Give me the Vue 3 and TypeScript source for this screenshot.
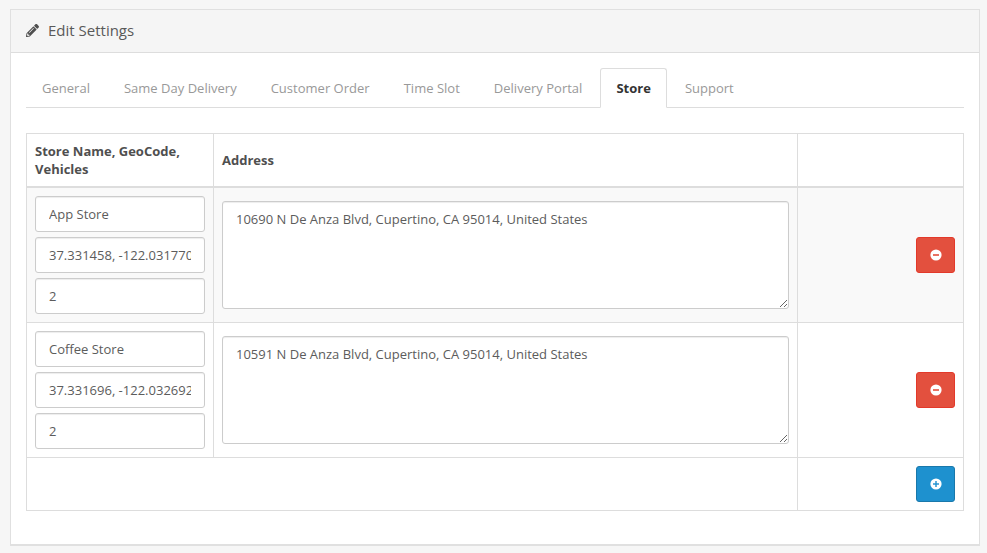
<script setup lang="ts">
interface Store { name: string; geo: string; vehicles: string; address: string }
const tabs: string[] = ['General', 'Same Day Delivery', 'Customer Order', 'Time Slot', 'Delivery Portal', 'Store', 'Support']
const stores: Store[] = [
  { name: 'App Store', geo: '37.331458, -122.031770', vehicles: '2', address: '10690 N De Anza Blvd, Cupertino, CA 95014, United States' },
  { name: 'Coffee Store', geo: '37.331696, -122.032692', vehicles: '2', address: '10591 N De Anza Blvd, Cupertino, CA 95014, United States' }
]
</script>

<template>
  <div class="panel">
    <div class="heading">
      <svg class="pencil" viewBox="0 0 512 512" aria-hidden="true">
        <path fill="currentColor" d="M497.9 142.1l-46.1 46.1c-4.7 4.7-12.3 4.7-17 0l-111-111c-4.7-4.7-4.7-12.3 0-17l46.1-46.1c18.7-18.7 49.1-18.7 67.9 0l60.1 60.1c18.8 18.7 18.8 49.1 0 67.9zM284.2 99.8L21.6 362.4.4 483.9c-2.9 16.4 11.4 30.6 27.8 27.8l121.5-21.3 262.6-262.6c4.7-4.7 4.7-12.3 0-17l-111-111c-4.8-4.7-12.4-4.7-17.1 0zM124.1 339.9c-5.5-5.5-5.5-14.3 0-19.8l154-154c5.5-5.5 14.3-5.5 19.8 0s5.5 14.3 0 19.8l-154 154c-5.5 5.5-14.3 5.5-19.8 0zM88 424h48v36.3l-64.5 11.3-31.1-31.1L51.7 376H88v48z" />
      </svg>
      <h3>Edit Settings</h3>
    </div>
    <div class="body">
      <ul class="tabs">
        <li v-for="t in tabs" :key="t" :class="{ active: t === 'Store' }">{{ t }}</li>
      </ul>
      <table class="grid">
        <colgroup>
          <col class="c1" />
          <col class="c2" />
          <col class="c3" />
        </colgroup>
        <thead>
          <tr>
            <th>Store Name, GeoCode, Vehicles</th>
            <th>Address</th>
            <th></th>
          </tr>
        </thead>
        <tbody>
          <tr v-for="s in stores" :key="s.name">
            <td>
              <input class="field" type="text" :value="s.name" />
              <input class="field" type="text" :value="s.geo" />
              <input class="field last" type="text" :value="s.vehicles" />
            </td>
            <td>
              <textarea class="area" :value="s.address"></textarea>
            </td>
            <td class="act">
              <button class="btn danger" type="button" aria-label="Remove">
                <svg viewBox="0 0 12 12" aria-hidden="true">
                  <circle cx="6" cy="6" r="5.6" fill="#fff" />
                  <rect x="3" y="5.2" width="6" height="1.6" fill="#e3503e" />
                </svg>
              </button>
            </td>
          </tr>
        </tbody>
        <tfoot>
          <tr>
            <td colspan="2"></td>
            <td class="act">
              <button class="btn primary" type="button" aria-label="Add">
                <svg viewBox="0 0 12 12" aria-hidden="true">
                  <circle cx="6" cy="6" r="5.6" fill="#fff" />
                  <rect x="3" y="5.3" width="6" height="1.4" fill="#1e91cf" />
                  <rect x="5.3" y="3" width="1.4" height="6" fill="#1e91cf" />
                </svg>
              </button>
            </td>
          </tr>
        </tfoot>
      </table>
    </div>
  </div>
</template>

<style>
html, body { background: #f6f6f6; margin: 0; }
</style>

<style scoped>
.panel {
  box-sizing: border-box;
  margin: 9px 7px 0 10px;
  height: 537px;
  background: #fff;
  border: 1px solid #e0e0e0;
  border-bottom-width: 2px;
  font-family: "Open Sans", sans-serif;
  font-size: 13px;
  line-height: 18px;
  color: #666;
}
.heading {
  display: flex;
  align-items: center;
  gap: 9px;
  padding: 0 15px 2px;
  box-sizing: border-box;
  height: 43px;
  background: #f5f5f5;
  border-bottom: 1px solid #ddd;
  color: #4f4f4f;
}
.pencil { width: 13px; height: 13px; flex: none; }
h3 { margin: 0; font-size: 15px; font-weight: 400; color: #595959; }
.body { padding: 15px; }
.tabs {
  display: flex;
  list-style: none;
  margin: 0 0 25px;
  padding: 0;
  height: 39px;
  border-bottom: 1px solid #ddd;
  box-sizing: content-box;
}
.tabs li {
  height: 39px;
  box-sizing: border-box;
  margin-right: 2px;
  padding: 10px 15px;
  border: 1px solid transparent;
  border-radius: 3px 3px 0 0;
  color: #999;
  font-size: 13px;
  letter-spacing: 0.012px;
}
.tabs li.active {
  height: 40px;
  background: #fff;
  border-color: #ddd #ddd #fff;
  color: #333;
  font-weight: 700;
}
.grid {
  width: 938px;
  table-layout: fixed;
  border-collapse: collapse;
  border: 1px solid #ddd;
}
.c1 { width: 187px; }
.c2 { width: 584px; }
.grid th, .grid td {
  border: 1px solid #ddd;
  padding: 8px;
  vertical-align: middle;
  text-align: left;
}
.grid th {
  border-bottom-width: 2px;
  color: #4f4f4f;
  font-weight: 700;
}
tbody tr:nth-child(odd) td { background: #f9f9f9; }
.field {
  display: block;
  box-sizing: border-box;
  width: 170px;
  height: 36px;
  margin: 0 0 5px;
  padding: 8px 13px;
  background: #fff;
  border: 1px solid #ccc;
  border-radius: 3px;
  box-shadow: inset 0 1px 1px rgba(0, 0, 0, .075);
  font: 13px/18px "Open Sans", sans-serif;
  color: #5c5c5c;
}
.field.last { margin-bottom: 0; }
.area {
  display: block;
  box-sizing: border-box;
  width: 567px;
  height: 108px;
  padding: 8px 13px;
  background: #fff;
  border: 1px solid #ccc;
  border-radius: 3px;
  box-shadow: inset 0 1px 1px rgba(0, 0, 0, .075);
  font: 13px/18px "Open Sans", sans-serif;
  color: #5c5c5c;
}
.act { text-align: right !important; }
.btn {
  display: inline-flex;
  align-items: center;
  justify-content: center;
  box-sizing: border-box;
  width: 39px;
  height: 36px;
  padding: 0;
  border: 1px solid;
  border-radius: 3px;
  vertical-align: middle;
}
.btn svg { width: 12px; height: 12px; }
.danger { background: #e3503e; border-color: #e3392a; }
.primary { background: #1e91cf; border-color: #1978ab; }
</style>
